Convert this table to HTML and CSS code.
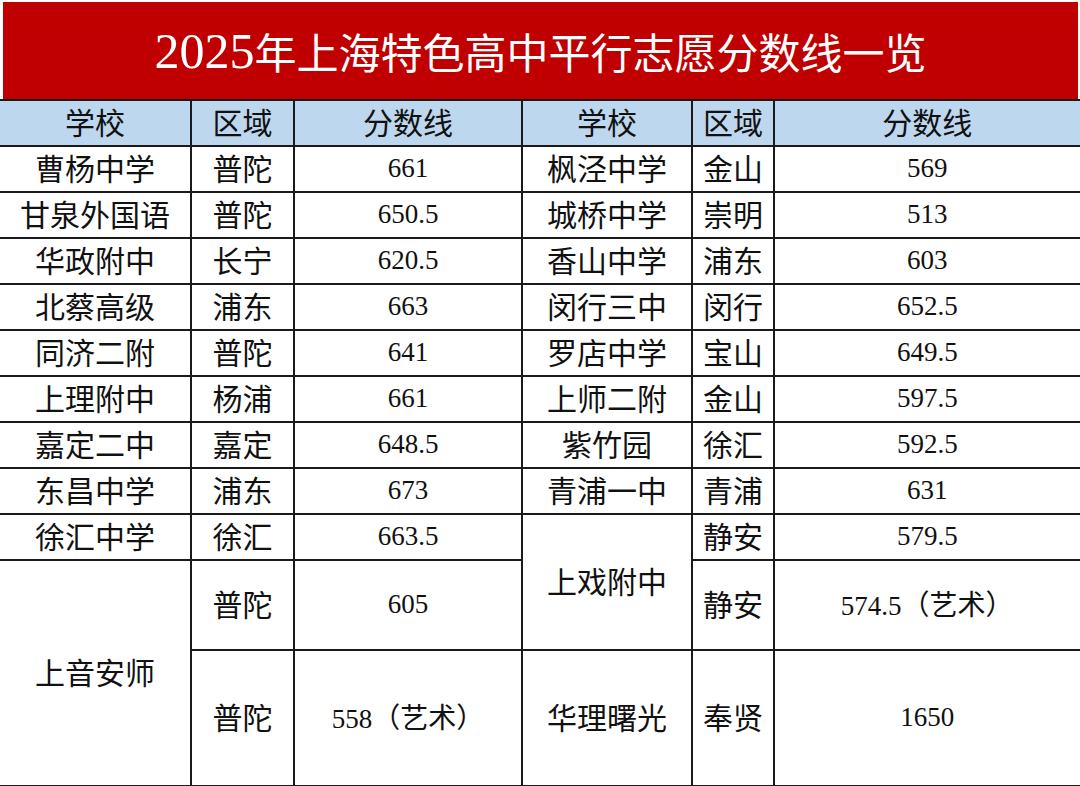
FILE: index.html
```html
<!DOCTYPE html>
<html lang="zh-CN">
<head>
<meta charset="utf-8">
<title>2025年上海特色高中平行志愿分数线一览</title>
<link rel="stylesheet" href="styles.css">
</head>
<body>
<div class="title"><span class="num">2025</span>年上海特色高中平行志愿分数线一览</div>
<table class="scores">
  <colgroup>
    <col class="c1"><col class="c2"><col class="c3"><col class="c4"><col class="c5"><col class="c6">
  </colgroup>
  <tr class="head">
    <th>学校</th><th>区域</th><th>分数线</th><th>学校</th><th>区域</th><th>分数线</th>
  </tr>
  <tr class="row"><td>曹杨中学</td><td>普陀</td><td class="n">661</td><td>枫泾中学</td><td>金山</td><td class="n">569</td></tr>
  <tr class="row"><td>甘泉外国语</td><td>普陀</td><td class="n">650.5</td><td>城桥中学</td><td>崇明</td><td class="n">513</td></tr>
  <tr class="row"><td>华政附中</td><td>长宁</td><td class="n">620.5</td><td>香山中学</td><td>浦东</td><td class="n">603</td></tr>
  <tr class="row"><td>北蔡高级</td><td>浦东</td><td class="n">663</td><td>闵行三中</td><td>闵行</td><td class="n">652.5</td></tr>
  <tr class="row"><td>同济二附</td><td>普陀</td><td class="n">641</td><td>罗店中学</td><td>宝山</td><td class="n">649.5</td></tr>
  <tr class="row"><td>上理附中</td><td>杨浦</td><td class="n">661</td><td>上师二附</td><td>金山</td><td class="n">597.5</td></tr>
  <tr class="row"><td>嘉定二中</td><td>嘉定</td><td class="n">648.5</td><td>紫竹园</td><td>徐汇</td><td class="n">592.5</td></tr>
  <tr class="row"><td>东昌中学</td><td>浦东</td><td class="n">673</td><td>青浦一中</td><td>青浦</td><td class="n">631</td></tr>
  <tr class="row"><td>徐汇中学</td><td>徐汇</td><td class="n">663.5</td><td rowspan="2">上戏附中</td><td>静安</td><td class="n">579.5</td></tr>
  <tr class="row mid"><td rowspan="2">上音安师</td><td>普陀</td><td class="n">605</td><td>静安</td><td class="n">574.5<span class="cn">（艺术）</span></td></tr>
  <tr class="row tall"><td>普陀</td><td class="n">558<span class="cn">（艺术）</span></td><td>华理曙光</td><td>奉贤</td><td class="n">1650</td></tr>
</table>
</body>
</html>
```
FILE: styles.css
```css
html, body {
  margin: 0;
  padding: 0;
  background: #ffffff;
}
body {
  width: 1080px;
  height: 786px;
  overflow: hidden;
  font-family: "Liberation Serif", "Noto Sans CJK SC", serif;
  color: #111111;
}
.title {
  margin: 2px 2px 0 3px;
  height: 97px;
  background: #c00000;
  color: #ffffff;
  display: flex;
  align-items: center;
  justify-content: center;
  font-family: "Noto Sans CJK SC", sans-serif;
  font-size: 42px;
  font-weight: 400;
  letter-spacing: 0;
  box-sizing: border-box;
}
.title .num {
  font-family: "Liberation Serif", serif;
  font-size: 50px;
}
.scores {
  width: 1080px;
  table-layout: fixed;
  border-collapse: collapse;
  border-top: 2px solid #111;
  border-bottom: 2px solid #111;
}
.c1 { width: 191px; }
.c2 { width: 103px; }
.c3 { width: 228px; }
.c4 { width: 170px; }
.c5 { width: 82px; }
.c6 { width: 306px; }
.scores th, .scores td {
  border: 2px solid #1a1a1a;
  padding: 0 0 4px 0;
  text-align: center;
  vertical-align: middle;
  font-family: "Noto Sans CJK SC", sans-serif;
  font-size: 30px;
  font-weight: 400;
  line-height: 1;
  color: #111;
  white-space: nowrap;
}
.scores tr > :first-child { border-left: none; }
.scores tr > :last-child { border-right: 1px solid #333; }
.head th {
  background: #bdd7ee;
  height: 40px;
}
.row td { height: 40px; }
.row.mid td { height: 84px; }
.row.tall td { height: 130px; }
.scores td.n {
  font-family: "Liberation Serif", serif;
  font-size: 27px;
  padding-bottom: 2px;
}
.scores td.n .cn {
  font-family: "Noto Sans CJK SC", sans-serif;
  font-size: 28px;
}
```
